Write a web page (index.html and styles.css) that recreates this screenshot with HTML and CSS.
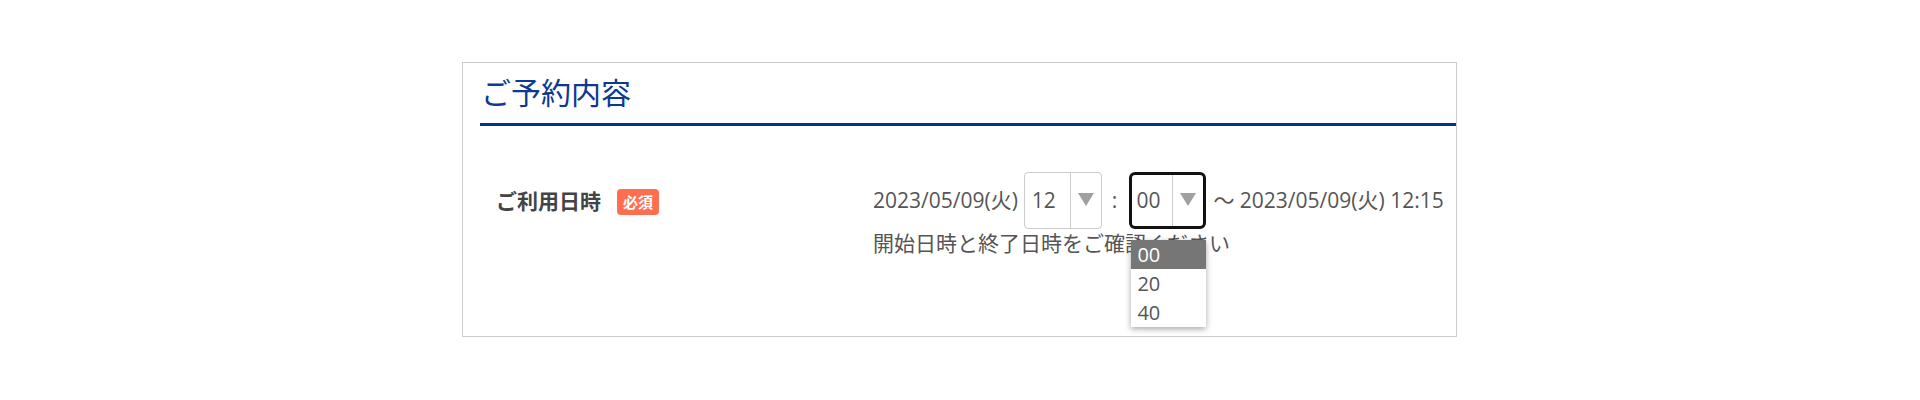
FILE: index.html
```html
<!DOCTYPE html>
<html>
<head>
<meta charset="utf-8" />
<title>ご予約内容</title>
<link rel="stylesheet" href="styles.css">
</head>
<body>
<div class="box">
	<h2 class="box_title">ご予約内容</h2>
	<dl class="form_row">
		<dt class="form_label">ご利用日時<span class="req">必須</span></dt>
		<dd class="form_body">
			<div class="time_line">
				<span>2023/05/09(火)</span>
				<div class="sel">
					<span class="sel_val">12</span>
					<span class="sel_btn"><i class="tri"></i></span>
				</div>
				<span class="colon">:</span>
				<div class="sel sel_focus">
					<span class="sel_val">00</span>
					<span class="sel_btn"><i class="tri"></i></span>
					<ul class="sel_list">
						<li class="on">00</li>
						<li>20</li>
						<li>40</li>
					</ul>
				</div>
				<span class="end_time">～ 2023/05/09(火) 12:15</span>
			</div>
			<p class="note">開始日時と終了日時をご確認ください</p>
		</dd>
	</dl>
</div>
</body>
</html>
```

FILE: styles.css
```css
body{margin:0;font:normal 21px/1.5 "Open Sans","Noto Sans CJK JP",sans-serif;color:#555;background:#fff;}
dl,dt,dd,ul,li,p,h2{margin:0;padding:0;}
ul{list-style:none;}

.box{box-sizing:border-box;width:995px;height:275px;margin:62px 0 0 462px;border:1px solid #ccc;}
.box_title{margin-left:17px;padding-top:7px;padding-left:1px;height:53px;font-size:30px;font-weight:normal;line-height:45px;color:#0d3a8e;border-bottom:3px solid #00338d;}

.form_row{display:flex;align-items:flex-start;padding-top:46px;}
.form_label{display:flex;align-items:center;width:377px;padding-left:33px;padding-top:14px;font-size:21px;font-weight:bold;color:#444;}
.req{display:inline-block;margin-left:16px;padding:0 6px;height:26px;line-height:26px;font-size:15px;font-weight:bold;color:#fff;background:#ff6e4f;border-radius:4px;}

.form_body{flex:1;}
.time_line{display:flex;align-items:center;}
.sel{position:relative;display:flex;box-sizing:border-box;width:78px;height:57px;margin-left:6px;border:1px solid #ccc;border-radius:4px;}
.sel_val{flex:1;padding-left:7px;line-height:55px;}
.sel_btn{display:flex;align-items:center;justify-content:center;width:30px;border-left:1px solid #ccc;}
.tri{display:block;width:0;height:0;margin-top:-2px;border-left:8px solid transparent;border-right:8px solid transparent;border-top:13px solid #a0a0a0;}
.colon{margin:0 12px 0 10px;}
.sel_focus{margin-left:0;width:77px;border:3px solid #111;border-radius:6px;}
.sel_focus .sel_val{padding-left:4px;line-height:51px;}
.end_time{margin-left:7px;}

.sel_list{position:absolute;left:-1px;top:65px;width:75px;background:#fff;box-shadow:0 2px 6px rgba(0,0,0,0.35);}
.sel_list li{height:29px;line-height:29px;padding-left:6px;font-size:20px;}
.sel_list .on{background:#767676;color:#fff;}

.note{line-height:28px;}
```
